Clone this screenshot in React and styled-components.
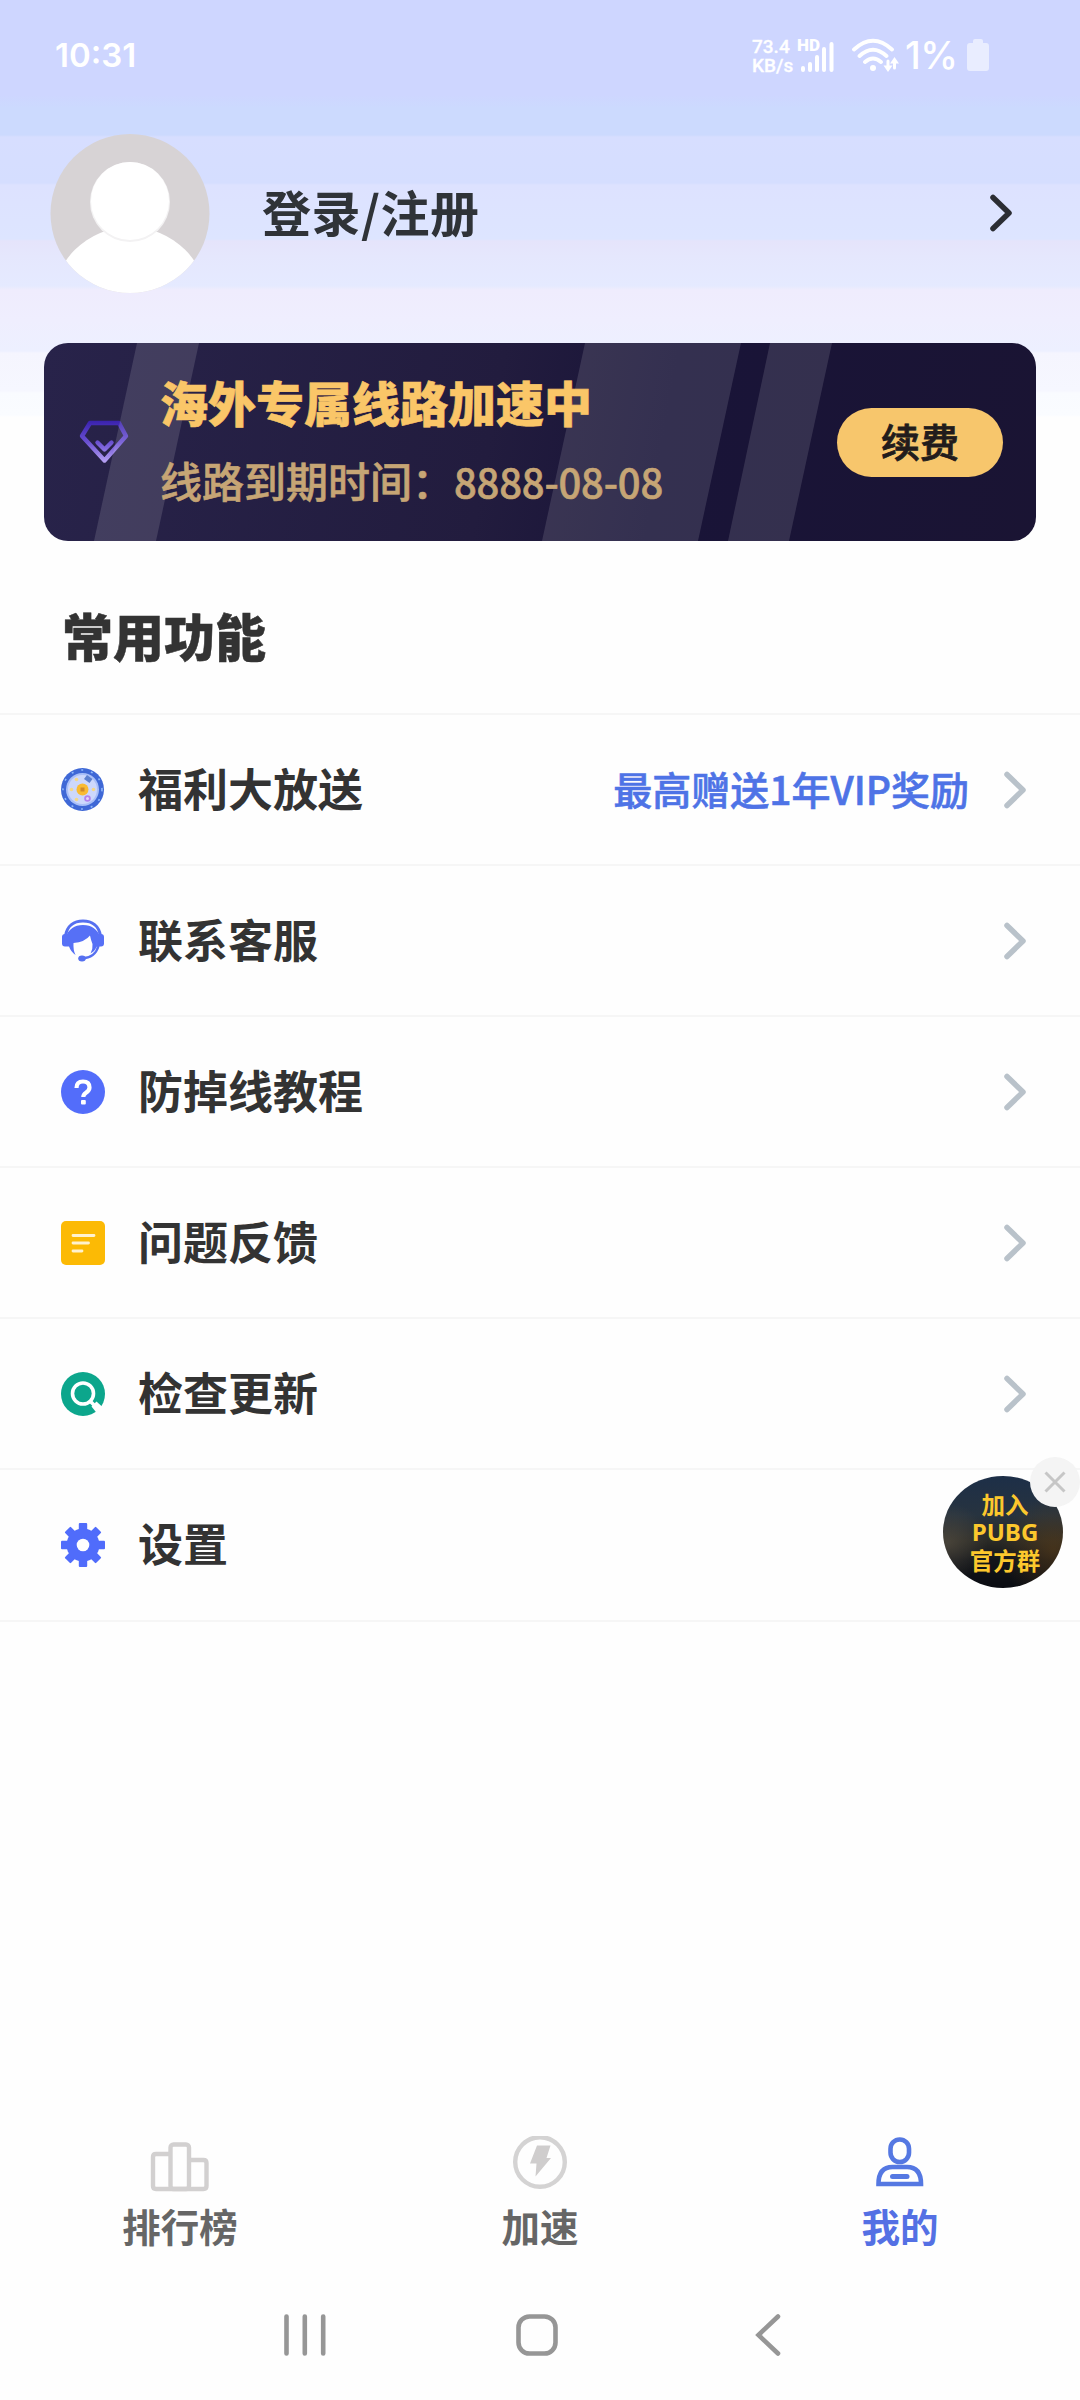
import React from 'react';
import styled, { createGlobalStyle, css } from 'styled-components';

const GlobalStyle = createGlobalStyle`
  * {
    box-sizing: border-box;
  }

  body {
    margin: 0;
    background: #fefefe;
    font-family: 'Noto Sans CJK SC', 'Noto Sans', sans-serif;
    color: #333;
  }

  svg {
    display: block;
    flex: none;
  }
`;

const Screen = styled.div`
  position: relative;
  display: flex;
  flex-direction: column;
  width: 1080px;
  height: 2400px;
  overflow: hidden;
  background: linear-gradient(
      #ced6ff 0,
      #ced6ff 95px,
      #ccdafe 108px,
      #ccdafe 135px,
      #d7deff 137px,
      #d5deff 183px,
      #dde2ff 185px,
      #dde5ff 239px,
      #e5e4fb 241px,
      #e5e7fd 256px,
      #e5eaff 286px,
      #efecfd 290px,
      #efeefe 320px,
      #edf0ff 351px,
      #f5f5fe 353px,
      #f6f7ff 391px,
      #f9fbff 393px,
      #fafcff 415px,
      #fefefe 417px
    )
    #fefefe;
`;

const StatusBar = styled.div`
  display: flex;
  align-items: center;
  height: 110px;
  padding: 0 90px 0 55px;
  color: #fff;
`;

const Clock = styled.span`
  flex: 1;
  font-family: Inter, sans-serif;
  font-size: 33px;
  font-weight: 600;
  line-height: 40px;
`;

const NetSpeed = styled.span`
  width: 46px;
  padding-top: 2px;
  font-family: Roboto, sans-serif;
  font-size: 19px;
  font-weight: 500;
  line-height: 19px;
  white-space: nowrap;
  -webkit-text-stroke: 0.3px #fff;
`;

const SignalBox = styled.div`
  position: relative;
  width: 53px;
  height: 36px;
`;

const HdLabel = styled.span`
  position: absolute;
  top: 0;
  left: -1px;
  font-family: Roboto, sans-serif;
  font-size: 17px;
  font-weight: 900;
  line-height: 16px;
`;

const Battery = styled.span`
  width: 61px;
  font-family: Inter, sans-serif;
  font-size: 38px;
  font-weight: 500;
  line-height: 40px;
  letter-spacing: -0.5px;
`;

const Profile = styled.div`
  display: flex;
  align-items: center;
  height: 233px;
  padding: 0 67px 27px 50px;
`;

const UserName = styled.span`
  flex: 1;
  margin-left: 52px;
  padding-bottom: 5px;
  font-size: 49px;
  font-weight: 700;
  line-height: 60px;
  letter-spacing: 0.5px;
  color: #2f3338;
`;

const VipCard = styled.div`
  position: relative;
  display: flex;
  align-items: center;
  width: 992px;
  height: 198px;
  margin: 0 44px;
  padding: 0 33px 0 35px;
  border-radius: 24px;
  overflow: hidden;
  background: linear-gradient(100deg, #28234a, #221c3e 45%, #191438 62%, #1a1433);
`;

const Stripes = styled.svg`
  position: absolute;
  top: 0;
  left: 0;
`;

const VipInfo = styled.div`
  position: relative;
  flex: 1;
  margin-left: 31px;
  padding-bottom: 2px;
`;

const VipTitle = styled.div`
  font-size: 48px;
  font-weight: 900;
  line-height: 62px;
  color: #fac668;
  -webkit-text-stroke: 0.6px #fac668;
`;

const VipExpire = styled.div`
  margin-top: 17px;
  font-size: 42px;
  line-height: 62px;
  font-weight: 500;
  color: #c6a575;
  -webkit-text-stroke: 0.6px #c6a575;
`;

const ExpireDate = styled.span`
  font-size: 40px;
  letter-spacing: -0.2px;
`;

const RenewButton = styled.button`
  position: relative;
  width: 166px;
  height: 69px;
  padding: 0 0 4px;
  border: 0;
  border-radius: 35px;
  background: #f7c66c;
  font: 500 39px/60px 'Noto Sans CJK SC', sans-serif;
  color: #221c1c;
  -webkit-text-stroke: 0.8px #221c1c;
`;

const SectionTitle = styled.h2`
  height: 172px;
  margin: 0;
  padding: 58px 0 0 62px;
  font-size: 51px;
  font-weight: 900;
  line-height: 72px;
  -webkit-text-stroke: 0.5px #333;
`;

const Menu = styled.div`
  flex: 1;
  border-top: 2px solid #f6f6f6;
`;

const MenuItem = styled.div`
  display: flex;
  align-items: center;
  height: 151.1px;
  padding: 0 53px 0 61px;
  border-bottom: 2px solid #f6f6f6;
`;

const MenuLabel = styled.span`
  flex: 1;
  margin-left: 33px;
  padding-bottom: 4px;
  font-size: 45px;
  font-weight: 700;
  line-height: 60px;
`;

const MenuHint = styled.span`
  margin-right: 34px;
  padding-bottom: 4px;
  font-size: 39px;
  font-weight: 500;
  line-height: 60px;
  color: #4e73e6;
  -webkit-text-stroke: 0.6px #4e73e6;
`;

const FloatAd = styled.div`
  position: absolute;
  top: 1476px;
  left: 943px;
  display: flex;
  flex-direction: column;
  align-items: center;
  width: 120px;
  height: 112px;
  padding: 14px 0 0 4px;
  border-radius: 50%;
  background: radial-gradient(circle at 92% 66%, rgba(92, 62, 24, 0.6), transparent 40%),
    radial-gradient(circle at 4% 60%, rgba(92, 84, 70, 0.6), transparent 30%),
    linear-gradient(#1d2f48, #27333f 35%, #2a2a26 58%, #12151a 75%, #0a0c12);
  font: 700 23.5px/28px 'Noto Sans CJK SC', sans-serif;
  color: #fcc82d;
`;

const AdName = styled.span`
  font-family: 'Open Sans', sans-serif;
  font-size: 24px;
`;

const AdClose = styled.div`
  position: absolute;
  top: 1457px;
  left: 1030px;
  display: flex;
  align-items: center;
  justify-content: center;
  width: 50px;
  height: 50px;
  border-radius: 50%;
  background: #f4f4f4;
`;

const TabBar = styled.div`
  display: grid;
  grid-template-columns: repeat(3, 1fr);
  height: 134px;
`;

const Tab = styled.div`
  display: flex;
  flex-direction: column;
  align-items: center;
  font-size: 38.5px;
  font-weight: 700;
  line-height: 58px;
  color: #666;

  ${(props) =>
    props.$active &&
    css`
      color: #5470e4;
    `}
`;

const SystemNav = styled.div`
  display: flex;
  align-items: center;
  justify-content: center;
  gap: 190px;
  height: 130px;
  padding: 0 7px 0 0;
`;

const Chevron = ({ color, width = 6 }) => (
  <svg width="24" height="40" viewBox="0 0 24 40" fill="none" stroke={color} strokeWidth={width} strokeLinecap="round" strokeLinejoin="round">
    <path d="M4 4.500 20 20 4 35.500" />
  </svg>
);

const Avatar = () => (
  <svg width="160" height="160" viewBox="0 0 160 160">
    <defs>
      <clipPath id="avatar">
        <circle cx="80" cy="80.500" r="79.500" />
      </clipPath>
    </defs>
    <g clipPath="url(#avatar)">
      <rect width="160" height="160" fill="#d7d3d5" />
      <circle cx="80" cy="172" r="78" fill="#fff" />
      <circle cx="80" cy="69" r="40" fill="#f3f2f3" />
      <circle cx="80" cy="68" r="39" fill="#fff" />
    </g>
  </svg>
);

const SignalIcon = () => (
  <svg width="37" height="36" viewBox="0 0 37 36" stroke="#fff" strokeWidth="4" strokeLinecap="round">
    <path d="M5 33v-2M12 33v-6M19 33V20M26 33V12M33.500 33V7" />
  </svg>
);

const SignalWrap = styled.div`
  position: absolute;
  top: 0;
  left: 0;
`;

const WifiIcon = () => (
  <svg width="54" height="36" viewBox="0 0 54 36" fill="none" stroke="#fff" strokeWidth="3.800" strokeLinecap="round">
    <path d="M3 12.500Q22-5 41 12.500M8.500 19Q22 6.500 35.500 19M14 25Q22 18 30 25" />
    <circle cx="22" cy="31" r="3" fill="#fff" stroke="none" />
    <path d="M37 24v6M43.500 31v-6" strokeWidth="3" />
    <path d="M32.500 28.500h9L37 35zM39 26.500h9L43.500 20z" fill="#fff" stroke="none" />
  </svg>
);

const BatteryIcon = () => (
  <svg width="24" height="34" viewBox="0 0 24 34" fill="#e9edff">
    <path d="M7 3q0-2 2-2h6q2 0 2 2v2h3q3 0 3 3v22q0 3-3 3H4q-3 0-3-3V8q0-3 3-3h3z" />
  </svg>
);

const GemIcon = () => (
  <svg width="50" height="46" viewBox="0 0 50 46" fill="none" stroke="url(#gem)" strokeWidth="4.400" strokeLinejoin="round" strokeLinecap="round">
    <defs>
      <linearGradient id="gem" gradientUnits="userSpaceOnUse" x1="0" y1="2" x2="0" y2="44">
        <stop offset="0" stopColor="#3a22ae" />
        <stop offset="0.500" stopColor="#6a50d2" />
        <stop offset="1" stopColor="#b9a4f4" />
      </linearGradient>
    </defs>
    <path d="M11 4h29l7 13L25.500 41.500 3 17z" />
    <path d="M18.500 23.500l7 7 7-7" />
  </svg>
);

const WheelIcon = () => (
  <svg width="44" height="44" viewBox="0 0 44 44">
    <circle cx="21.500" cy="21.500" r="21.500" fill="#3f68d6" />
    <circle cx="21.500" cy="21.500" r="19.500" fill="none" stroke="#8fb8fa" strokeWidth="1.600" strokeDasharray="2 8" />
    <circle cx="21.500" cy="21.500" r="16.500" fill="#a9bff8" />
    <circle cx="21.500" cy="21.500" r="14.500" fill="#cdd8fc" />
    <g fill="#f3d88c">
      <circle cx="15.500" cy="11.500" r="1.800" />
      <circle cx="10.500" cy="21.500" r="1.800" />
      <circle cx="32.500" cy="21.500" r="1.800" />
      <circle cx="15.500" cy="31.500" r="1.800" />
    </g>
    <path d="M24.500 9l5.500 4" stroke="#5d80cf" strokeWidth="5" />
    <circle cx="26.500" cy="30.500" r="2.400" fill="#e3d4fb" stroke="#b183ee" strokeWidth="1.800" />
    <circle cx="21.500" cy="21.500" r="6" fill="#f9bb33" />
    <rect x="19.500" y="19.500" width="4" height="4" fill="#d08a2a" />
  </svg>
);

const ServiceIcon = () => (
  <svg width="44" height="44" viewBox="0 0 44 44">
    {/* headband */}
    <path d="M4.500 17C6 7 13 2 22 2s16 5 17.500 15" fill="none" stroke="#5670f0" strokeWidth="3" />
    {/* hair and ear cups */}
    <path d="M22 6C13 6 8 11 6 15H4q-3 0-3 3v6.500q0 3 3 3h4Q10 33 14.500 36q-2.500-5-2-12Q24 23 29 16.500q1 5 2.500 8.500.5 5-2 9.500 4.500-2.500 6.500-7h4q3 0 3-3V18q0-3-3-3h-2C36 11 31 6 22 6z" fill="#5670f6" />
    {/* microphone arm */}
    <path d="M37.500 27Q34 39 21 39.500" fill="none" stroke="#5670f0" strokeWidth="2.400" />
    <ellipse cx="21" cy="39.500" rx="3.800" ry="3" fill="#5670f0" />
  </svg>
);

const HelpIcon = () => (
  <svg width="44" height="44" viewBox="0 0 44 44">
    <circle cx="22" cy="22" r="22" fill="#536dfa" />
    <path d="M15.500 18q0-6.500 6.500-6.500t6.500 6q0 3-3.500 5.300-2.700 1.800-2.700 4.200" fill="none" stroke="#fff" strokeWidth="4.200" />
    <rect x="20" y="30" width="4.800" height="4.400" rx="1" fill="#fff" />
  </svg>
);

const FeedbackIcon = () => (
  <svg width="44" height="44" viewBox="0 0 44 44">
    <rect width="44" height="44" rx="5" fill="#fcba05" />
    <path d="M12 14.500h21M12 22h15.500M12 30h9" stroke="#fff2cf" strokeWidth="2.800" strokeLinecap="round" />
  </svg>
);

const UpdateIcon = () => (
  <svg width="44" height="44" viewBox="0 0 44 44">
    <circle cx="22" cy="22" r="22" fill="#0ca68c" />
    <circle cx="22" cy="21.500" r="10.500" fill="none" stroke="#fff" strokeWidth="3.600" />
    <path d="M29.500 29.500 33 33" stroke="#fff" strokeWidth="3.600" />
    <path d="M30.500 34.500l5-5 6 5.500-5 7z" fill="#fefefe" />
  </svg>
);

const teeth = [0, 45, 90, 135, 180, 225, 270, 315];

const SettingsIcon = () => (
  <svg width="44" height="44" viewBox="0 0 44 44" fill="#506cfb">
    {teeth.map((angle) => (
      <rect key={angle} x="17.800" y="0" width="8.400" height="12" rx="1" transform={`rotate(${angle} 22 22)`} />
    ))}
    <circle cx="22" cy="22" r="16.500" />
    <circle cx="22" cy="22" r="6.300" fill="#fefefe" />
  </svg>
);

const RankIcon = () => (
  <svg width="60" height="60" viewBox="0 0 60 60" fill="none" stroke="#d2d0d0" strokeWidth="4.400">
    <path d="M20.500 18H6q-3 0-3 3V50q0 3 3 3h47.500q3 0 3-3V27q0-3-3-3H39.500" />
    <rect x="20.500" y="8.500" width="18.500" height="44.500" rx="3" />
  </svg>
);

const BoostIcon = () => (
  <svg width="60" height="60" viewBox="0 0 60 60">
    <circle cx="30" cy="26" r="24.800" fill="none" stroke="#d4d3d3" strokeWidth="4.400" />
    <path d="M27 9.500h13.500L36.500 22H41L25.500 40.500 26.500 27.500H20z" fill="#cfcdcd" />
  </svg>
);

const MineIcon = () => (
  <svg width="60" height="60" viewBox="0 0 60 60" fill="none" stroke="#5578e2" strokeWidth="4.600">
    <rect x="20.500" y="3.500" width="18.500" height="22.500" rx="9.200" />
    <path d="M8.500 48q0-17 14-17h14.500q14 0 14 17z" />
    <path d="M22.500 40.500h14.500" strokeLinecap="round" strokeWidth="5" />
  </svg>
);

const RecentsIcon = () => (
  <svg width="42" height="42" viewBox="0 0 42 42" stroke="#969696" strokeWidth="4.600" strokeLinecap="round">
    <path d="M2.500 2.500v37M20.800 2.500v37M39.200 2.500v37" />
  </svg>
);

const HomeIcon = () => (
  <svg width="42" height="42" viewBox="0 0 42 42" fill="none" stroke="#969696" strokeWidth="4.600">
    <rect x="2.500" y="2.500" width="37" height="37" rx="11" />
  </svg>
);

const BackIcon = () => (
  <svg width="42" height="42" viewBox="0 0 42 42" fill="none" stroke="#969696" strokeWidth="4.600" strokeLinecap="round">
    <path d="M30 2.500 10.500 21 30 39.500" />
  </svg>
);

const menuItems = [
  { label: '福利大放送', icon: WheelIcon, hint: '最高赠送1年VIP奖励' },
  { label: '联系客服', icon: ServiceIcon },
  { label: '防掉线教程', icon: HelpIcon },
  { label: '问题反馈', icon: FeedbackIcon },
  { label: '检查更新', icon: UpdateIcon },
  { label: '设置', icon: SettingsIcon },
];

const App = () => {
  return (
    <Screen>
      <GlobalStyle />
      <StatusBar>
        <Clock>10:31</Clock>
        <NetSpeed>
          73.4
          <br />
          KB/s
        </NetSpeed>
        <SignalBox>
          <HdLabel>HD</HdLabel>
          <SignalWrap>
            <SignalIcon />
          </SignalWrap>
        </SignalBox>
        <WifiIcon />
        <Battery>1%</Battery>
        <BatteryIcon />
      </StatusBar>

      <Profile>
        <Avatar />
        <UserName>登录/注册</UserName>
        <Chevron color="#2b2d33" width={5.5} />
      </Profile>

      <VipCard>
        <Stripes width="992" height="198" viewBox="0 0 992 198" fill="#fff">
          <path d="M93 0h62L112 198H50z" opacity="0.130" />
          <path d="M541 0h156L654 198H498z" opacity="0.120" />
          <path d="M726 0h62L745 198H684z" opacity="0.120" />
        </Stripes>
        <GemIcon />
        <VipInfo>
          <VipTitle>海外专属线路加速中</VipTitle>
          <VipExpire>
            线路到期时间：<ExpireDate>8888-08-08</ExpireDate>
          </VipExpire>
        </VipInfo>
        <RenewButton>续费</RenewButton>
      </VipCard>

      <SectionTitle>常用功能</SectionTitle>

      <Menu>
        {menuItems.map(({ label, icon: Icon, hint }) => (
          <MenuItem key={label}>
            <Icon />
            <MenuLabel>{label}</MenuLabel>
            {hint && <MenuHint>{hint}</MenuHint>}
            {/* The settings row has its arrow under the floating ad */}
            {label !== '设置' && <Chevron color="#b9c2ca" width={5.5} />}
          </MenuItem>
        ))}
      </Menu>

      <TabBar>
        <Tab>
          <RankIcon />
          排行榜
        </Tab>
        <Tab>
          <BoostIcon />
          加速
        </Tab>
        <Tab $active>
          <MineIcon />
          我的
        </Tab>
      </TabBar>

      <SystemNav>
        <RecentsIcon />
        <HomeIcon />
        <BackIcon />
      </SystemNav>

      <FloatAd>
        <span>加入</span>
        <AdName>PUBG</AdName>
        <span>官方群</span>
      </FloatAd>
      <AdClose>
        <svg width="22" height="22" viewBox="0 0 22 22" stroke="#c6c6c6" strokeWidth="3">
          <path d="M1.500 1.500l19 19M20.500 1.500l-19 19" />
        </svg>
      </AdClose>
    </Screen>
  );
};

export default App;
